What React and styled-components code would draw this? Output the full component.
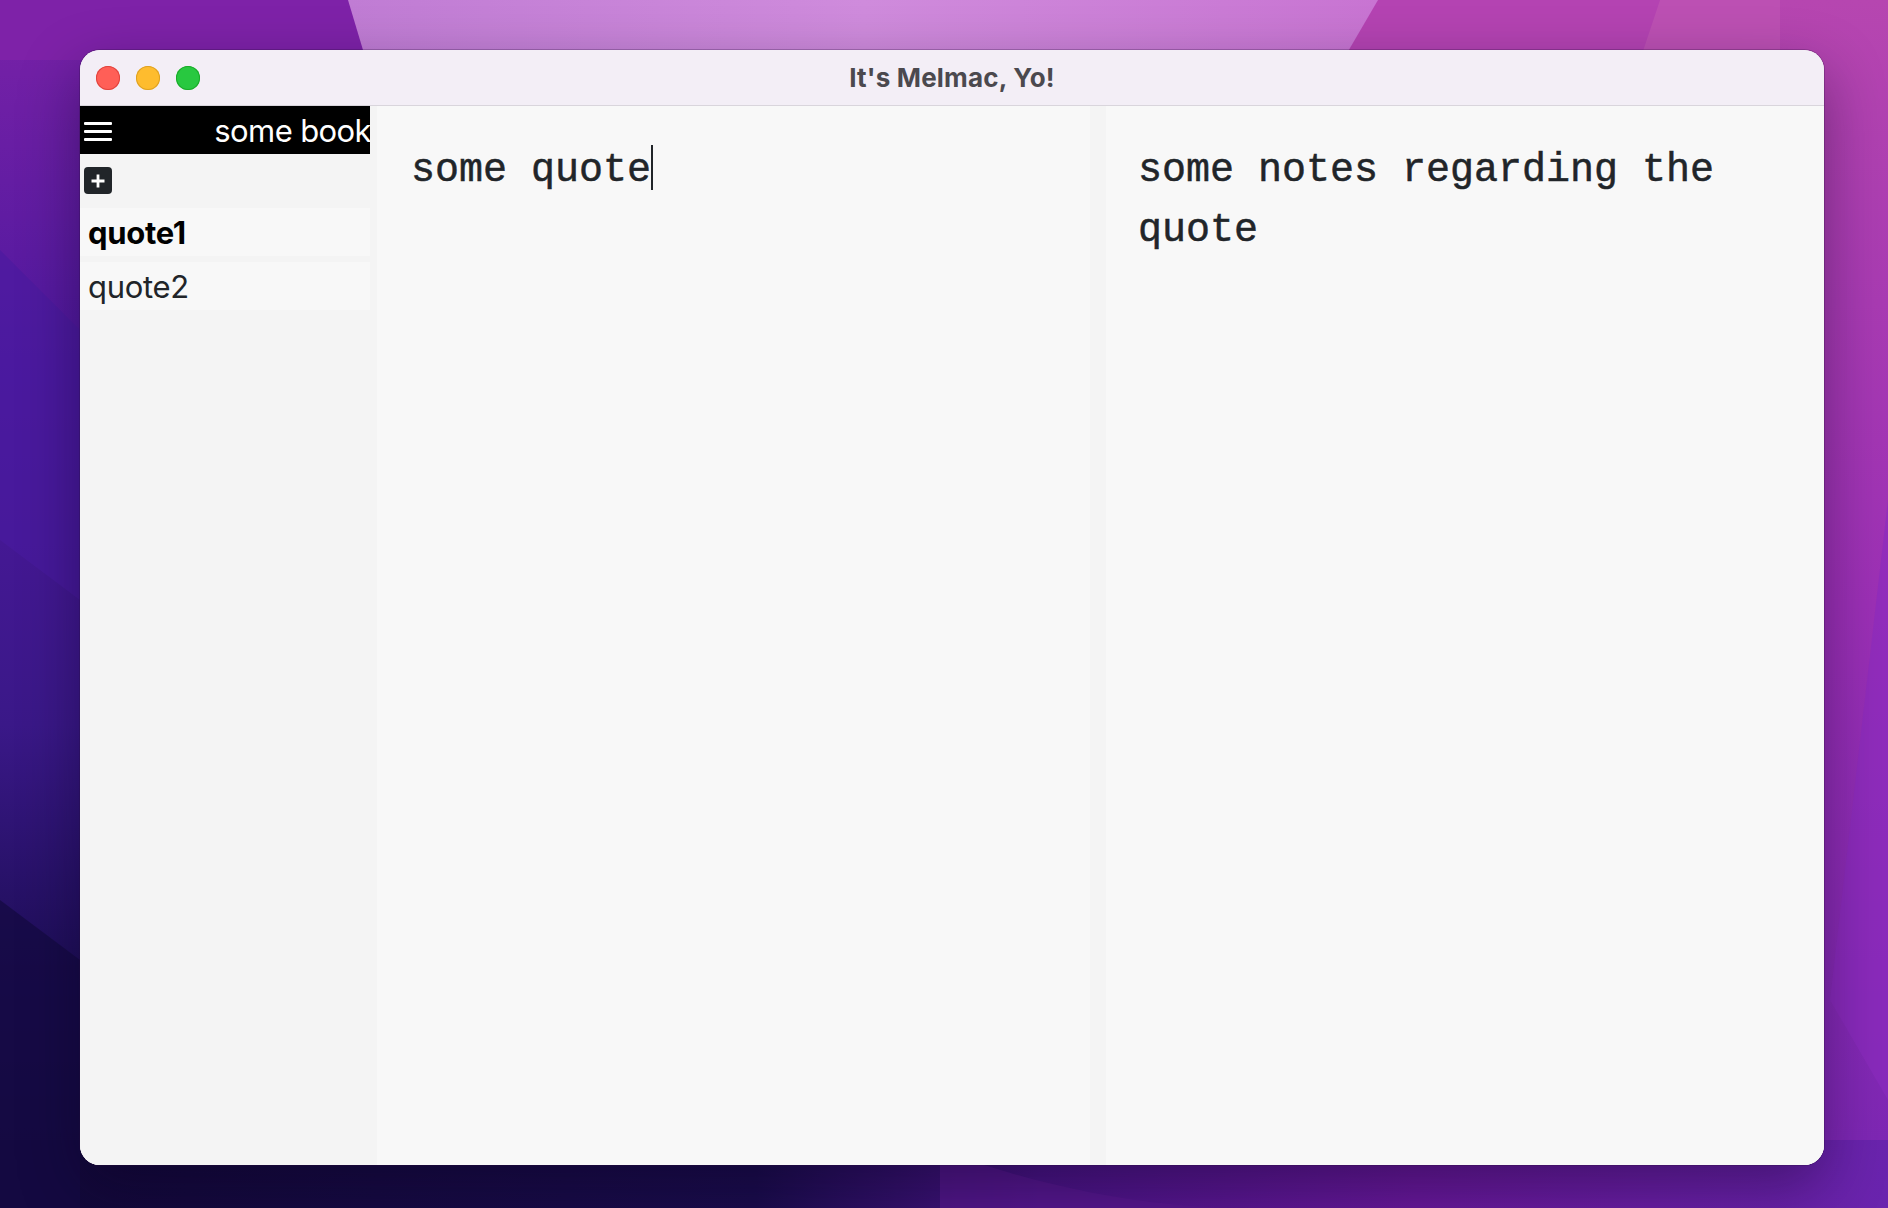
import React from "react";
import styled, { createGlobalStyle } from "styled-components";

const Global = createGlobalStyle`
  html, body { margin: 0; padding: 0; }
  body { width: 1888px; height: 1208px; overflow: hidden; font-family: Inter, "Noto Sans", sans-serif; }
  * { box-sizing: border-box; }
`;

const Desktop = styled.div`
  position: relative;
  width: 1888px;
  height: 1208px;
  padding: 50px 64px 43px 80px;
  background: #3a1690;
`;

const Wallpaper = styled.svg`
  position: absolute;
  inset: 0;
  width: 1888px;
  height: 1208px;
  z-index: 0;
`;

const Window = styled.div`
  position: relative;
  z-index: 1;
  width: 1744px;
  height: 1115px;
  display: flex;
  flex-direction: column;
  border-radius: 20px;
  overflow: hidden;
  background: #f4f4f4;
  box-shadow: 0 0 0 1px rgba(40, 10, 60, 0.25), 0 22px 60px rgba(10, 0, 30, 0.4);
`;

const TitleBar = styled.div`
  height: 56px;
  flex: none;
  display: grid;
  grid-template-columns: 1fr auto 1fr;
  align-items: center;
  background: #f3eef6;
  border-bottom: 1px solid #d9d5dc;
`;

const Lights = styled.div`
  display: flex;
  gap: 16px;
  padding-left: 16px;
  padding-top: 1px;
`;

const Light = styled.span`
  width: 24px;
  height: 24px;
  border-radius: 50%;
  background: ${(p) => p.$fill};
  box-shadow: inset 0 0 0 1px ${(p) => p.$ring};
`;

const Title = styled.div`
  font-family: Inter, "Noto Sans", sans-serif;
  font-weight: 700;
  font-size: 26px;
  color: #4b494e;
  letter-spacing: 0.2px;
`;

const Body = styled.div`
  flex: 1;
  display: grid;
  grid-template-columns: 290px 720px 1fr;
  background: #f4f4f4;
`;

const Sidebar = styled.div`
  display: flex;
  flex-direction: column;
  background: #f4f4f4;
`;

const SideHeader = styled.div`
  height: 48px;
  background: #000;
  display: flex;
  align-items: center;
  justify-content: space-between;
  padding-left: 4px;
  overflow: hidden;
`;

const MenuButton = styled.span`
  display: flex;
  flex-direction: column;
  gap: 5px;
  width: 28px;
  margin-top: 2px;
  & > i {
    display: block;
    height: 3px;
    background: #fff;
    border-radius: 1px;
  }
`;

const BookTitle = styled.span`
  color: #fff;
  font-family: Inter, "Noto Sans", sans-serif;
  font-size: 31px;
  letter-spacing: -0.6px;
  white-space: nowrap;
  margin-right: -1px;
`;

const AddRow = styled.div`
  padding: 13px 4px 14px;
  display: flex;
`;

const AddButton = styled.span`
  width: 28px;
  height: 27px;
  border-radius: 4px;
  background: #212529;
  display: flex;
  align-items: center;
  justify-content: center;
`;

const QuoteList = styled.div`
  display: flex;
  flex-direction: column;
  gap: 6px;
`;

const QuoteItem = styled.div`
  height: 48px;
  display: flex;
  align-items: center;
  padding-left: 8px;
  background: #f8f8f8;
  font-family: Inter, "Noto Sans", sans-serif;
  font-size: 31px;
  letter-spacing: -0.3px;
  font-weight: ${(p) => (p.$active ? 700 : 400)};
  color: ${(p) => (p.$active ? "#000" : "#212529")};
`;

const Panel = styled.div`
  margin-left: ${(p) => p.$offset}px;
  background: #f8f8f8;
  padding: 35px 32px 32px ${(p) => p.$inset}px;
  font-family: "Courier New", "Liberation Mono", monospace;
  font-size: 40px;
  line-height: 60px;
  color: #212529;
  -webkit-text-stroke: 0.5px #212529;
`;

const Caret = styled.span`
  display: inline-block;
  width: 2px;
  height: 45px;
  background: #212529;
  vertical-align: -9px;
`;

export default function App() {
  return (
    <>
      <Global />
      <Desktop>
        <Wallpaper viewBox="0 0 1888 1208" preserveAspectRatio="none">
          <defs>
            <linearGradient id="base" x1="0" y1="1" x2="1" y2="0">
              <stop offset="0" stopColor="#120838" />
              <stop offset="0.3" stopColor="#2a1070" />
              <stop offset="0.55" stopColor="#6a1fa8" />
              <stop offset="0.8" stopColor="#a434b2" />
              <stop offset="1" stopColor="#c050b4" />
            </linearGradient>
            <linearGradient id="left" x1="0" y1="0" x2="0" y2="1">
              <stop offset="0" stopColor="#7a22a8" />
              <stop offset="0.3" stopColor="#4e189e" />
              <stop offset="0.6" stopColor="#3a1888" />
              <stop offset="0.8" stopColor="#1e0e58" />
              <stop offset="1" stopColor="#110834" />
            </linearGradient>
            <linearGradient id="top" x1="0" y1="0" x2="1" y2="0">
              <stop offset="0" stopColor="#c07cd4" />
              <stop offset="0.5" stopColor="#cf8bdc" />
              <stop offset="1" stopColor="#c874d2" />
            </linearGradient>
            <linearGradient id="right" x1="0" y1="0" x2="0" y2="1">
              <stop offset="0" stopColor="#b646b0" />
              <stop offset="0.5" stopColor="#9c30b6" />
              <stop offset="1" stopColor="#7a26b4" />
            </linearGradient>
            <linearGradient id="bottom" x1="0" y1="0" x2="1" y2="0">
              <stop offset="0" stopColor="#120838" />
              <stop offset="0.4" stopColor="#1a0c4c" />
              <stop offset="0.55" stopColor="#4a1486" />
              <stop offset="0.75" stopColor="#68189a" />
              <stop offset="1" stopColor="#6a24ae" />
            </linearGradient>
          </defs>
          <rect x="0" y="0" width="1888" height="1208" fill="url(#base)" />
          <rect x="0" y="0" width="120" height="1208" fill="url(#left)" />
          <path d="M0 0 H350 L368 60 H0 Z" fill="#7e22a8" />
          <path d="M348 0 H1380 L1345 60 H366 Z" fill="url(#top)" />
          <path d="M1378 0 H1888 V60 H1343 Z" fill="#b443b2" />
          <path d="M1660 0 H1888 V60 H1640 Z" fill="#bf55b4" opacity="0.7" />
          <rect x="1780" y="0" width="108" height="1208" fill="url(#right)" />
          <path d="M1888 500 L1830 1000 L1888 1100 Z" fill="#8c2cc0" opacity="0.6" />
          <rect x="0" y="1140" width="1888" height="68" fill="url(#bottom)" />
          <path d="M940 1150 C1050 1190 1150 1208 1250 1208 H940 Z" fill="#5a1890" opacity="0.7" />
          <path d="M0 250 L80 330 V600 L0 540 Z" fill="#4a1aa0" opacity="0.6" />
          <path d="M0 900 L80 960 V1208 H0 Z" fill="#150a44" opacity="0.8" />
        </Wallpaper>
        <Window>
          <TitleBar>
            <Lights>
              <Light $fill="#ff5f57" $ring="#e0443e" />
              <Light $fill="#febc2e" $ring="#dea123" />
              <Light $fill="#28c840" $ring="#1aab29" />
            </Lights>
            <Title>It's Melmac, Yo!</Title>
            <span />
          </TitleBar>
          <Body>
            <Sidebar>
              <SideHeader>
                <MenuButton>
                  <i />
                  <i />
                  <i />
                </MenuButton>
                <BookTitle>some book</BookTitle>
              </SideHeader>
              <AddRow>
                <AddButton>
                  <svg width="16" height="16" viewBox="0 0 16 16">
                    <path d="M8 1.5 V14.5 M1.5 8 H14.5" stroke="#fff" strokeWidth="2.8" strokeLinecap="butt" />
                  </svg>
                </AddButton>
              </AddRow>
              <QuoteList>
                <QuoteItem $active>quote1</QuoteItem>
                <QuoteItem>quote2</QuoteItem>
              </QuoteList>
            </Sidebar>
            <Panel $offset={7} $inset={34}>
              some quote<Caret />
            </Panel>
            <Panel $offset={16} $inset={32}>some notes regarding the quote</Panel>
          </Body>
        </Window>
      </Desktop>
    </>
  );
}
